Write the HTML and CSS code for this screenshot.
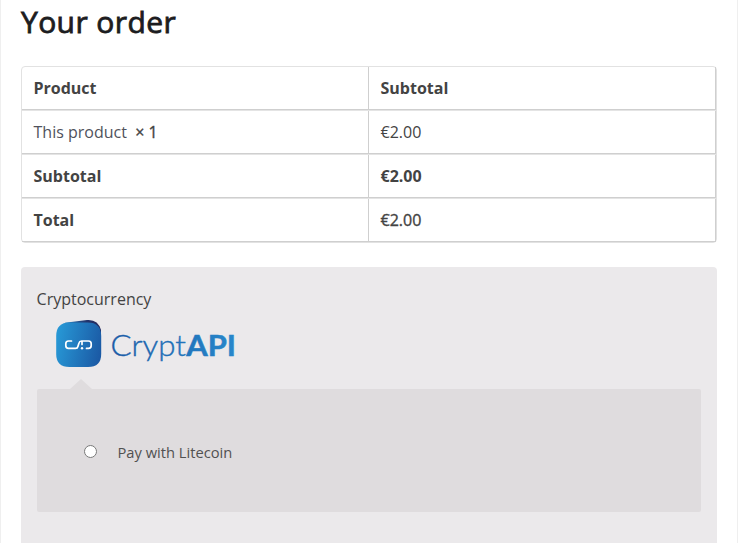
FILE: index.html
```html
<!DOCTYPE html>
<html lang="en">
<head>
<meta charset="utf-8">
<title>Your order</title>
<link rel="stylesheet" href="styles.css">
</head>
<body>
<main class="page">
  <h1 class="title">Your order</h1>
  <div class="order">
    <div class="row head"><div class="cell">Product</div><div class="cell">Subtotal</div></div>
    <div class="row"><div class="cell"><span class="product">This product</span><span class="qty">× 1</span></div><div class="cell">€2.00</div></div>
    <div class="row head"><div class="cell">Subtotal</div><div class="cell">€2.00</div></div>
    <div class="row"><div class="cell bold">Total</div><div class="cell medium">€2.00</div></div>
  </div>
  <section class="payment">
    <div class="method">Cryptocurrency</div>
    <svg class="logo" width="190" height="52" viewBox="0 0 190 52" role="img" aria-label="CryptAPI">
      <defs>
        <linearGradient id="tile" x1="0" y1="0.4" x2="1" y2="0.6"><stop offset="0" stop-color="#2797d5"/><stop offset="1" stop-color="#1b5aa5"/></linearGradient>
        <linearGradient id="word" gradientUnits="userSpaceOnUse" x1="61" y1="0" x2="185" y2="0"><stop offset="0" stop-color="#1b5aa5"/><stop offset="1" stop-color="#2787cb"/></linearGradient>
        <linearGradient id="fold" x1="0" y1="0" x2="1" y2="0"><stop offset="0" stop-color="#2379ba"/><stop offset=".6" stop-color="#23346c"/><stop offset="1" stop-color="#24275a"/></linearGradient>
      </defs>
      <path d="M15 4.700 37 2Q48 1 51 12V20H15Z" fill="url(#fold)"/>
      <path d="M19.500 4.500H38Q51.200 4.500 51.200 18V36Q51.200 49 38 49H19.500Q6.200 49 6.200 36V18Q6.200 4.500 19.500 4.500Z" fill="url(#tile)"/>
      <path d="M21.500 23H18.500Q15.800 23 15.800 25.700V27.500Q15.800 30.400 18.500 30.400H25.500Q27.500 30.400 27.900 28.500L29 25Q29.500 23 31.500 23H38.500Q41.200 23 41.200 25.700V27.500Q41.200 30.400 38.500 30.400H36.500M32 23V26.500" fill="none" stroke="#fff" stroke-width="1.700" stroke-linecap="round"/>
      <circle cx="32" cy="30.300" r="1.200" fill="#fff"/>
      <g fill="url(#word)" stroke="url(#word)"><text class="word" x="60.500" y="37.600" textLength="75.500" lengthAdjust="spacingAndGlyphs">Crypt</text><text class="word heavy" x="136.300" y="37.600" textLength="49.700" lengthAdjust="spacingAndGlyphs">API</text></g>
    </svg>
    <div class="options">
      <label class="option"><input type="radio" name="coin"><span>Pay with Litecoin</span></label>
    </div>
  </section>
</main>
</body>
</html>
```
FILE: styles.css
```css
* { box-sizing: border-box; }
body {
  margin: 0;
  height: 543px;
  overflow: hidden;
  background: #fff;
  color: #434343;
  font: 400 16px/24px "Open Sans", "Noto Sans", sans-serif;
}
.page {
  height: 543px;
  padding: 0 20px;
  border: solid #efefef;
  border-width: 0 1px;
}
.title {
  margin: 0;
  padding-top: 2px;
  height: 66px;
  color: #1c1c20;
  font-size: 30px;
  font-weight: 400;
  line-height: 40px;
  letter-spacing: .4px;
  -webkit-text-stroke: .8px #1c1c20;
}
.order {
  width: 696px;
  height: 177px;
  border: 1px solid #e2e2e2;
  border-radius: 4px;
}
.row {
  display: grid;
  grid-template-columns: 347px 347px;
  height: 44px;
  border-bottom: 1px solid #e4e4e4;
}
.row:last-child { height: 43px; border-bottom: 0; }
.cell {
  height: 43px;
  padding: 9px 11px 0 11.500px;
  border: solid #cfcfcf;
  border-width: 0 1px 1px 0;
}
.head, .bold { font-weight: 700; }
.medium, .qty { -webkit-text-stroke: .35px #434343; }
.product { color: #50525c; }
.qty { margin-left: 8.400px; }
.payment {
  width: 696px;
  height: 290px;
  margin-top: 24px;
  padding: 20px 16px 0 15.600px;
  border-radius: 4px;
  background: #ebe9eb;
}
.method { height: 31px; }
.logo { display: block; margin-left: 13.400px; }
.word { font: 300 28.500px "Lato", sans-serif; stroke-width: .35px; }
.heavy { font-weight: 700; stroke-width: .5px; }
.options {
  position: relative;
  height: 123px;
  margin: 19px 0 0 .4px;
  padding: 51px 47px 0;
  border-radius: 2px;
  background: #dfdcde;
}
.options::before {
  content: "";
  position: absolute;
  left: 33px;
  top: -10px;
  border: solid transparent;
  border-width: 0 11px 10px;
  border-bottom-color: #dfdcde;
}
.option { display: flex; font-size: 14.7px; color: #515151; }
.option input { width: 13px; height: 13px; margin: 5px 20.500px 0 0; }
```
